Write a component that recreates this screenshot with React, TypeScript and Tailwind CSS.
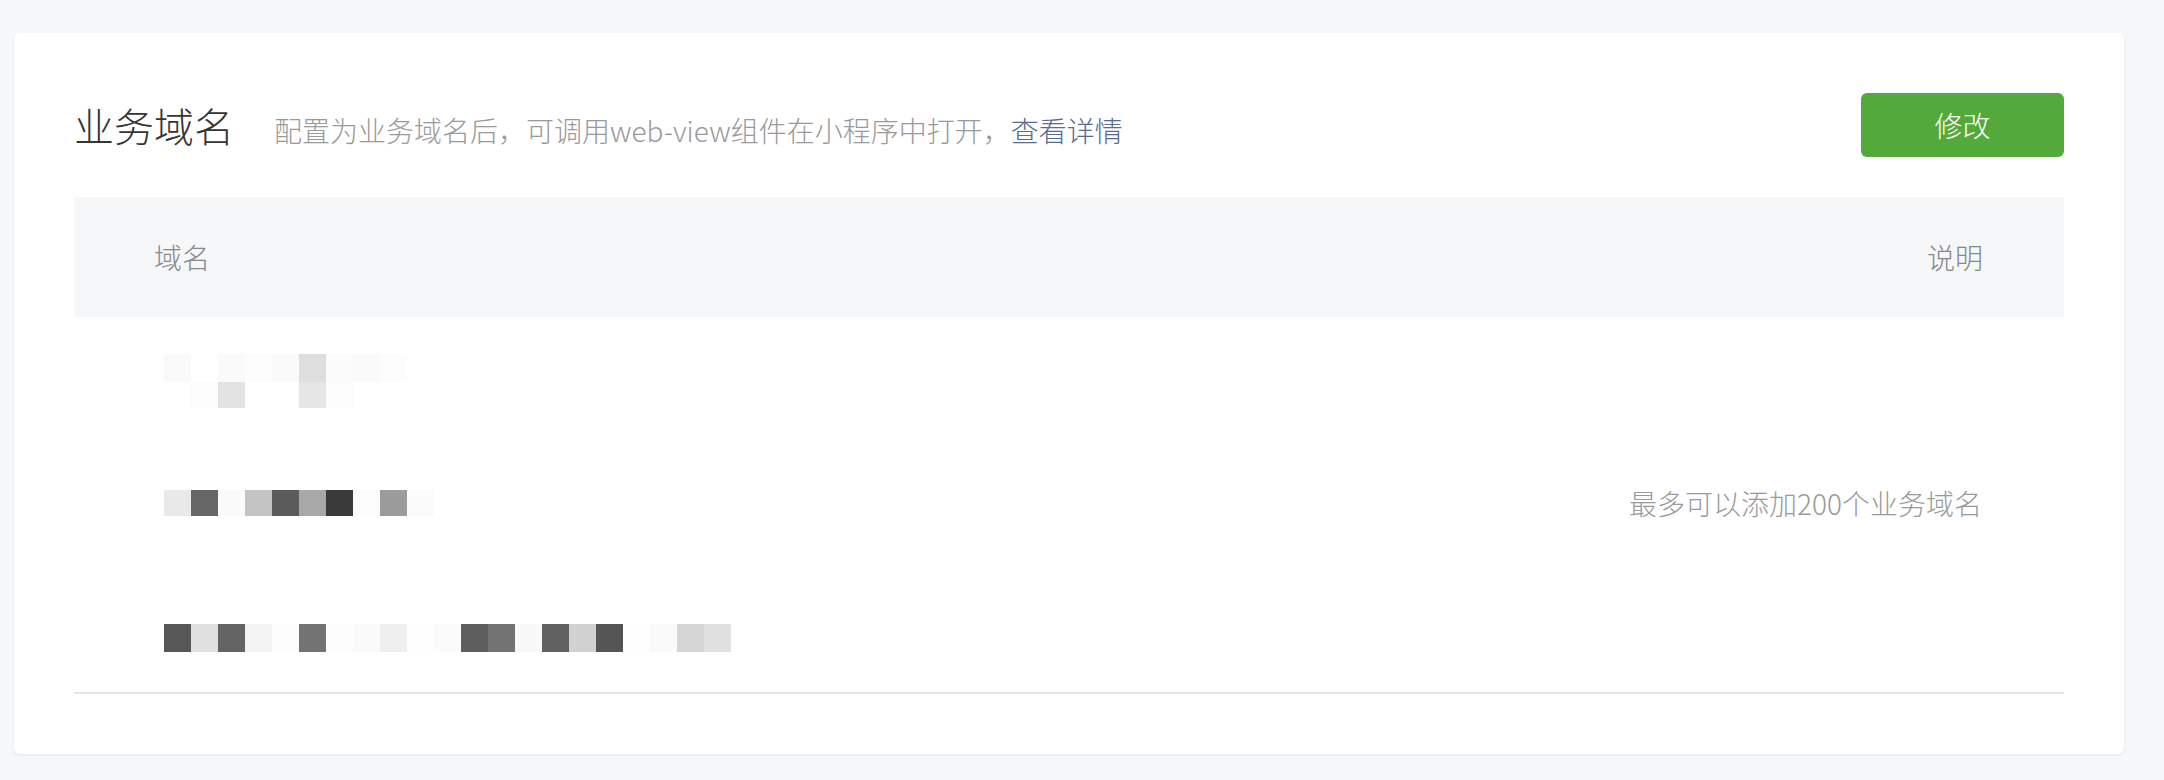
import React from "react";

const row1Top = ["#fafafa", "#ffffff", "#fafafa", "#fcfcfc", "#fafafa", "#dedede", "#fbfbfb", "#fafafa", "#fcfcfc"];
const row1Bottom = ["#ffffff", "#fcfcfc", "#e3e3e3", "#ffffff", "#ffffff", "#e6e6e6", "#fcfcfc"];
const row2 = ["#e9e9e9", "#666666", "#fafafa", "#c3c3c3", "#5b5b5b", "#a8a8a8", "#3a3a3a", "#fcfcfc", "#9b9b9b", "#fbfbfb"];
const row3 = [
  "#575757", "#e0e0e0", "#636363", "#f3f3f3", "#fcfcfc", "#737373", "#fdfdfd", "#fafafa", "#efefef", "#fefefe", "#fbfbfb",
  "#5e5e5e", "#737373", "#f8f8f8", "#606060", "#d1d1d1", "#555555", "#fefefe", "#fafafa", "#d6d6d6", "#e0e0e0",
];

function Mosaic({ colors, tall }: { colors: string[]; tall: boolean }) {
  return (
    <div className="flex">
      {colors.map((c, i) => (
        <div key={i} className={tall ? "h-[28px] w-[27px]" : "h-[26px] w-[27px]"} style={{ backgroundColor: c }} />
      ))}
    </div>
  );
}

export default function App() {
  return (
    <div
      className="min-h-screen w-full bg-[#f6f7f9] pt-[33px] pb-[27px] pl-[14px] pr-[40px] font-light"
      style={{ fontFamily: '"Noto Sans CJK SC", "Noto Sans", sans-serif' }}
    >
      <div className="rounded-[6px] bg-white p-[60px] shadow-[0_1px_3px_rgba(0,0,0,0.08)]">
        <div className="flex items-center justify-between">
          <div className="flex items-baseline">
            <h2 className="text-[40px] leading-[56px] text-[#353535] font-light">业务域名</h2>
            <p className="ml-[40px] text-[28px] leading-[40px] text-[#9a9a9a]">
              配置为业务域名后，可调用web-view组件在小程序中打开，
              <a className="text-[#576b95]">查看详情</a>
            </p>
          </div>
          <button className="h-[64px] w-[203px] rounded-[6px] bg-[#53a93a] text-[28px] font-light text-white">修改</button>
        </div>

        <div className="mt-[40px]">
          <div className="flex h-[120px] items-center justify-between bg-[#f6f7f9] pl-[80px] pr-[81px] text-[28px] text-[#888888]">
            <span>域名</span>
            <span>说明</span>
          </div>
          <div className="flex border-b-2 border-[#e5e5ea]">
            <div className="flex flex-1 flex-col pl-[90px] pt-[37px] pb-[40px]">
              <div className="flex flex-col">
                <Mosaic colors={row1Top} tall />
                <Mosaic colors={row1Bottom} tall={false} />
              </div>
              <div className="mt-[82px]">
                <Mosaic colors={row2} tall={false} />
              </div>
              <div className="mt-[108px]">
                <Mosaic colors={row3} tall />
              </div>
            </div>
            <div className="flex items-center pb-[4px] pr-[82px] text-[28px] text-[#9a9a9a]">最多可以添加200个业务域名</div>
          </div>
        </div>
      </div>
    </div>
  );
}
